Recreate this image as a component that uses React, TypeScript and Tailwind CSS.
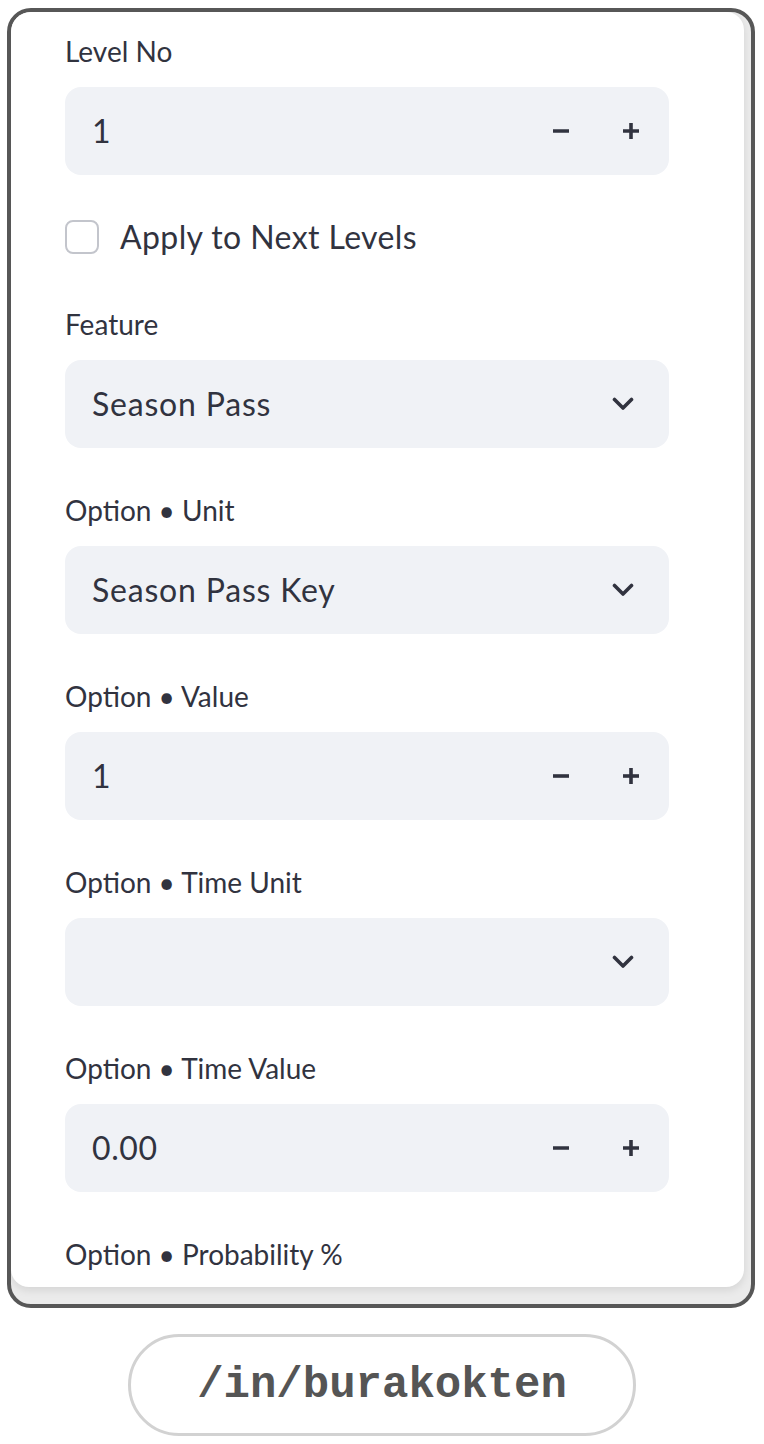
import React from "react";

const font = { fontFamily: "Lato, 'Open Sans', sans-serif" };

const Label = ({ text }: { text: string }) => (
  <div className="h-10 mb-4 text-[28px] leading-10 text-[#31333f]" style={font}>
    {text}
  </div>
);

const Minus = () => (
  <svg width="18" height="18" viewBox="0 0 18 18">
    <line x1="1" y1="9" x2="17" y2="9" stroke="#31333f" strokeWidth="3.6" />
  </svg>
);

const Plus = () => (
  <svg width="18" height="18" viewBox="0 0 18 18">
    <line x1="1" y1="9" x2="17" y2="9" stroke="#31333f" strokeWidth="3.6" />
    <line x1="9" y1="1" x2="9" y2="17" stroke="#31333f" strokeWidth="3.6" />
  </svg>
);

const Chevron = () => (
  <svg width="22" height="14" viewBox="0 0 22 14">
    <polyline points="2.5,2.5 11,11 19.5,2.5" fill="none" stroke="#31333f" strokeWidth="3.6" strokeLinecap="round" strokeLinejoin="round" />
  </svg>
);

const NumberField = ({ label, value }: { label: string; value: string }) => (
  <div className="mb-[42px]">
    <Label text={label} />
    <div className="h-[88px] w-[604px] rounded-[16px] bg-[#f0f2f6] flex items-center pl-[27px] pr-[29px]">
      <span className="flex-1 text-[32px] tracking-[0.6px] text-[#31333f]" style={font}>
        {value}
      </span>
      <div className="flex items-center gap-[52px]">
        <Minus />
        <Plus />
      </div>
    </div>
  </div>
);

const SelectField = ({ label, value }: { label: string; value: string }) => (
  <div className="mb-[42px]">
    <Label text={label} />
    <div className="h-[88px] w-[604px] rounded-[16px] bg-[#f0f2f6] flex items-center pl-[27px] pr-[35px]">
      <span className="flex-1 text-[32px] tracking-[0.8px] text-[#31333f]" style={font}>
        {value}
      </span>
      <Chevron />
    </div>
  </div>
);

export default function App() {
  return (
    <div className="w-[764px] min-h-[1444px] bg-white pt-2 pl-[7px]">
      {/* framed screenshot */}
      <div className="w-[748px] h-[1300px] border-4 border-[#575757] rounded-[24px] bg-[#ebebeb] overflow-hidden">
        <div className="w-[733px] h-[1275px] bg-white rounded-[18px] shadow-[0_3px_8px_rgba(0,0,0,0.10)] overflow-hidden flex flex-col pl-[54px] pt-[19px]">
          <NumberField label="Level No" value="1" />

          <div className="flex items-center mt-[3px] mb-[50px] h-[34px]">
            <div className="w-[34px] h-[34px] rounded-[8px] border-2 border-[#c3c5cc] bg-white" />
            <span className="ml-[21px] text-[32px] tracking-[0.4px] text-[#31333f]" style={font}>
              Apply to Next Levels
            </span>
          </div>

          <SelectField label="Feature" value="Season Pass" />
          <SelectField label="Option • Unit" value="Season Pass Key" />
          <NumberField label="Option • Value" value="1" />
          <SelectField label="Option • Time Unit" value="" />
          <NumberField label="Option • Time Value" value="0.00" />
          <Label text="Option • Probability %" />
        </div>
      </div>

      {/* handle badge */}
      <div className="flex justify-center mt-[26px] pr-[7px]">
        <div className="w-[508px] h-[102px] rounded-full border-[3px] border-[#d2d2d2] flex items-center justify-center">
          <span className="text-[44px] font-bold text-[#555555]" style={{ fontFamily: "'Liberation Mono', monospace" }}>
            /in/burakokten
          </span>
        </div>
      </div>
    </div>
  );
}
